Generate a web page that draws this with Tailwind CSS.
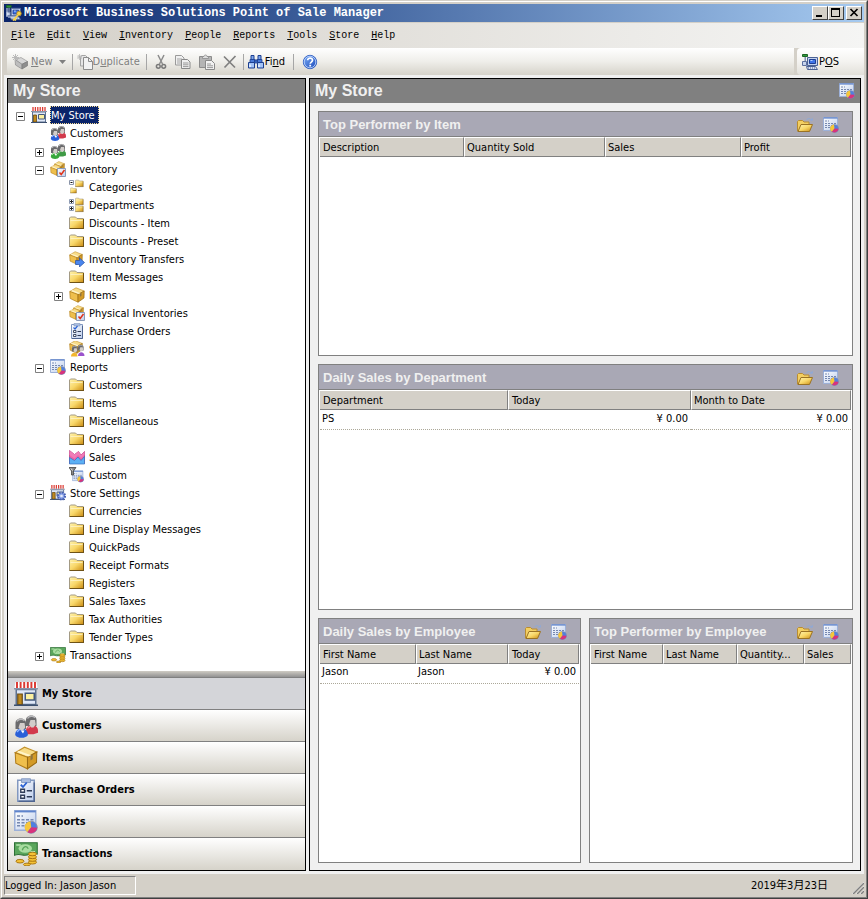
<!DOCTYPE html>
<html lang="en">
<head>
<meta charset="UTF-8" />
<meta name="viewport" content="width=device-width, initial-scale=1" />
<title>Microsoft Business Solutions Point of Sale Manager</title>
<script src="https://cdn.jsdelivr.net/npm/@tailwindcss/browser@4"></script>
</head>
<body class="bg-[#d4d0c8] font-['DejaVu_Sans_Condensed','DejaVu_Sans',sans-serif] text-[11px] leading-4 text-black">

  <!-- ICONS -->
  <svg class="size-0" aria-hidden="true">
    <defs>
      <linearGradient id="gFolder" x1="0" y1="0" x2="1" y2="1"><stop offset="0" stop-color="#fff3b0"/><stop offset=".5" stop-color="#f8d768"/><stop offset="1" stop-color="#c98a12"/></linearGradient>
      <linearGradient id="gBlue" x1="0" y1="0" x2="1" y2="1"><stop offset="0" stop-color="#7fb0f8"/><stop offset="1" stop-color="#1746b8"/></linearGradient>
      <linearGradient id="gPaper" x1="0" y1="0" x2="1" y2="1"><stop offset="0" stop-color="#ffffff"/><stop offset="1" stop-color="#bccdec"/></linearGradient>
      <symbol id="folder" viewBox="0 0 16 16">
        <path d="M.5 13.500V3l1-1h5l1.500 1.500h6.500v10z" fill="url(#gFolder)"/>
        <path d="M.5 13.500V3l1-1h5l1.500 1.500h6.500" fill="none" stroke="#a39a84"/>
        <path d="M1.500 5.500h12" stroke="#fffae0" opacity=".6"/>
        <path d="M.5 13.500h14.500M14.500 4v9.500" stroke="#6e5216"/>
      </symbol>
      <symbol id="folder-open" viewBox="0 0 16 16">
        <path d="M.5 14V4.500l1-1h4l1.500 1.500h5v9z" fill="#f3cf62" stroke="#b98c30"/>
        <path d="M1 14.500l3-7h11.500l-3 7z" fill="url(#gFolder)" stroke="#9a7224"/>
        <path d="M9.500 3c1.500-2 4-2 5 .5" fill="none" stroke="#8ea8d8"/><path d="M12.800 3.500h3V.8z" fill="#8ea8d8"/>
      </symbol>
      <symbol id="store" viewBox="0 0 16 16">
        <path d="M1.500 5h13v10h-13z" fill="#dfe8f8" stroke="#5f7290"/>
        <path d="M1 0h14l.8 4.500H.2z" fill="#fff"/>
        <path d="M2 0v4M4.400 0v4M6.800 0v4M9.200 0v4M11.600 0v4M14 0v4" stroke="#dc3a32" stroke-width="1.300"/>
        <path d="M0 4.500h16" stroke="#8a94a8"/>
        <path d="M2.500 8h3v7h-3z" fill="#c08a1c" stroke="#6a4a10" stroke-width=".8"/>
        <path d="M7.500 7.500h6v4.500h-6z" fill="#fbf0a0" stroke="#44587c"/>
        <path d="M0 15.500h16" stroke="#3c506f"/>
      </symbol>
      <symbol id="person-head" viewBox="0 0 16 16">
        <path d="M6 4c0-4 7-4 7 0v4H6z" fill="#6a6a6c"/><path d="M7 3c1-2 4-2 5-.5" stroke="#b9b9bb" fill="none"/>
        <path d="M9 4h3l.5 3-1.500 2H9.500L8 7z" fill="#d2cdca"/>
      </symbol>
      <symbol id="customers" viewBox="0 0 16 16">
        <path d="M8 11c0-5 8-5 8 0v1.500l-3 1H8z" fill="#d23a4c"/><path d="M9 9.500l2-1.500" stroke="#f48a94"/>
        <use href="#person-head" x="2" y="0" width="16" height="16"/>
        <path d="M.8 14c0-6 8.500-6 8.500 0-1 2.500-7.500 2.500-8.500 0z" fill="#2a60d8"/><path d="M2 12l2-2" stroke="#8cb4ff"/>
        <use href="#person-head" x="-5" y="2" width="16" height="16"/>
        <path d="M4.500 11l1.500 2 1-2z" fill="#fff"/>
      </symbol>
      <symbol id="employees" viewBox="0 0 16 16">
        <path d="M8 11c0-5 8-5 8 0v1.500l-3 1H8z" fill="#3f9a46"/><path d="M9 9.500l2-1.500" stroke="#96d898"/>
        <use href="#person-head" x="2" y="0" width="16" height="16"/>
        <path d="M.8 14c0-6 8.500-6 8.500 0-1 2.500-7.500 2.500-8.500 0z" fill="#37a83c"/><path d="M2 12l2-2" stroke="#a4e6a0"/>
        <use href="#person-head" x="-5" y="2" width="16" height="16"/>
        <path d="M4.500 11l1.500 2 1-2z" fill="#fff"/>
      </symbol>
      <symbol id="box" viewBox="0 0 16 16">
        <path d="M.8 4.500L7 .8l8.200 3.200L9 7.500z" fill="#f8dc88" stroke="#c3922c" stroke-width=".7"/>
        <path d="M.8 4.500L9 7.500v7.700L1.200 11.500z" fill="#efbf4c" stroke="#b07c1a" stroke-width=".7"/>
        <path d="M15.200 4L9 7.500v7.700l6-4.200z" fill="#d39a26" stroke="#9a6c14" stroke-width=".7"/>
        <path d="M3.200 3.100l8.200 3.100v1L11 6.400 9.800 7 2 4z" fill="#fff6d0" opacity=".9"/><path d="M11 6.500l1.500-.8v3l-1.500 1z" fill="#8f7440"/>
      </symbol>
      <symbol id="inventory" viewBox="0 0 16 16">
        <use href="#box" x="4" y="0" width="11" height="11"/>
        <use href="#box" x="0" y="3" width="12" height="12"/>
        <path d="M7.500 7.500h8v8h-8z" fill="url(#gPaper)" stroke="#8a9ab8"/>
        <path d="M9.500 11.500l1.700 2L14.500 9" fill="none" stroke="#e0341c" stroke-width="1.500"/>
      </symbol>
      <symbol id="categories" viewBox="0 0 16 16">
        <path d="M.5 1.500h4v4h-4z" fill="#fff" stroke="#8a94a8"/><path d="M1.500 3.500h2" stroke="#111"/>
        <use href="#folder" x="6" y="0" width="9" height="9"/><use href="#folder" x="1" y="8" width="7" height="7"/>
      </symbol>
      <symbol id="departments" viewBox="0 0 16 16">
        <path d="M.5 2.500h4v4h-4zM.5 9.500h4v4h-4z" fill="#fff" stroke="#8f9cb4"/><path d="M1 4.500h3M2.500 3v3M1 11.500h3M2.500 10v3" stroke="#222"/>
        <use href="#folder" x="6" y="0" width="9" height="9"/><use href="#folder" x="6" y="7" width="9" height="9"/>
      </symbol>
      <symbol id="transfer" viewBox="0 0 16 16">
        <use href="#box" x="0" y="0" width="14" height="14"/>
        <path d="M6.500 9.500h4V7l5 4.500-5 4.500v-2.500h-4z" fill="#4a86ee" stroke="#2450a8" stroke-width=".7"/>
      </symbol>
      <symbol id="orders" viewBox="0 0 16 16">
        <path d="M2.500 1.500h11v14h-11z" fill="url(#gPaper)" stroke="#8298c0"/><path d="M13.500 3v12.500H3" fill="none" stroke="#4f6590"/>
        <path d="M5 .5h6v2.500H5z" fill="#a9bce0" stroke="#8298c0" stroke-width=".6"/>
        <path d="M4.500 4.500l1.500 1.500 2.500-3" fill="none" stroke="#2b62d4" stroke-width="1.200"/>
        <path d="M4.500 7.500h2.500v2H4.500zM4.500 11.500h2.500v2H4.500z" fill="#fff" stroke="#2f3c58" stroke-width=".9"/><path d="M8.500 8.500H12M8.500 12.500H12" stroke="#2f3c58"/>
      </symbol>
      <symbol id="suppliers" viewBox="0 0 16 16">
        <use href="#box" x="0" y="-1" width="14" height="14"/>
        <use href="#person-head" x="-2" y="4" width="13" height="13"/><use href="#person-head" x="4" y="3" width="13" height="13"/>
        <path d="M2 15.500c0-5 6.500-5 6.500 0z" fill="#f3b62c"/><path d="M9 15c0-5 6.500-5 6.500 0z" fill="#9a52cc"/>
      </symbol>
      <symbol id="report" viewBox="0 0 16 16">
        <path d="M.5.500h14v13H.5z" fill="url(#gPaper)" stroke="#9cb0d8"/><path d="M.5 1h14" stroke="#5f84cc" stroke-width="1.200"/>
        <path d="M2 4h4M2 6.500h11M2 8.500h11M2 10.500h6" stroke="#7688b0" stroke-dasharray="2 1"/>
        <circle cx="11.500" cy="11.500" r="4" fill="#4f7fe0" stroke="#8c90a8" stroke-width=".6"/>
        <path d="M11.500 11.500L11 7.500c-5 .8-4.500 6-2 7.200z" fill="#f6c63a"/><path d="M11.500 11.500L9 14.800c2.500 1.500 6 .2 6.500-3z" fill="#d8337c"/>
      </symbol>
      <symbol id="sales" viewBox="0 0 16 16">
        <path d="M.5 1.500l5 4 4-3 2.500 3.500 3.500-3.500v12H.5z" fill="#ee62a6" stroke="#b02e72" stroke-width=".7"/>
        <path d="M.5 8.500l5 3 3.500-3.500 3 3.500 3.500-4v7.500H.5z" fill="#5cb0f4" stroke="#3470c0" stroke-width=".7"/>
        <path d="M.5 1.500l5 4 4-3 2.500 3.500 3.500-3.500v3.500L12 9 9 6 5.500 9.500.5 6z" fill="#f07cb8"/>
      </symbol>
      <symbol id="custom" viewBox="0 0 16 16">
        <use href="#report" x="3" y="3" width="12" height="13"/>
        <path d="M0 .5h7L4.500 4v4h-2V4z" fill="#888" stroke="#333" stroke-width=".7"/><path d="M2 1.500l1.500 2" stroke="#eee"/>
      </symbol>
      <symbol id="settings" viewBox="0 0 16 16">
        <use href="#store" width="15" height="15"/>
        <circle cx="11.500" cy="11" r="3.600" fill="#8ca4e8" stroke="#4860b4" stroke-width="2" stroke-dasharray="1.600 1.200"/>
        <circle cx="11.500" cy="11" r="1.300" fill="#e6ecfa"/>
      </symbol>
      <symbol id="transactions" viewBox="0 0 16 16">
        <path d="M.3.500h15.200v7.500c-3-1.500-6 1.500-9 .8-2.500-.6-4-1-6.200 0z" fill="#5aa65c" stroke="#2c6e34" stroke-width=".7"/>
        <ellipse cx="7.500" cy="4.300" rx="4.500" ry="2.800" fill="#a8dca0"/><path d="M5.500 5.500c1-3 3-3 4-1" fill="none" stroke="#5aa65c" stroke-width=".8"/><path d="M1.500 2h3M11 6.500h3" stroke="#b8e6b0"/>
        <g fill="#f4c136" stroke="#a4700c" stroke-width=".6"><ellipse cx="12.300" cy="13.500" rx="2.700" ry="1.200"/><ellipse cx="12.300" cy="11.700" rx="2.700" ry="1.200"/><ellipse cx="12.300" cy="9.900" rx="2.700" ry="1.200"/><ellipse cx="12.300" cy="8" rx="2.700" ry="1.200"/><ellipse cx="4" cy="12.800" rx="2.700" ry="1.200"/><ellipse cx="8.600" cy="15" rx="2.300" ry=".9"/></g>
      </symbol>
      <symbol id="pos" viewBox="0 0 16 16">
        <path d="M.5.500h5v2h-5z" fill="#2f9a3c" stroke="#1c6424"/><path d="M2.500 3h1.500v8H2.500z" fill="#7f90b0"/>
        <path d="M.5 7.500h4v4h-4z" fill="#c8d4ec" stroke="#5c70a0"/>
        <path d="M5.500 3.500h10v8h-10z" fill="#c4d2ee" stroke="#4c6294"/><path d="M7.500 5.500h6v4h-6z" fill="#3f74e8" stroke="#1e3f94"/><path d="M8.500 6.500h2" stroke="#b8d4ff"/>
        <path d="M4.500 12.500h9l2 3h-10z" fill="#dce4f4" stroke="#4c6294"/><path d="M6 14h8" stroke="#4c6294" stroke-dasharray="1 1"/>
      </symbol>
      <symbol id="app" viewBox="0 0 16 16">
        <use href="#pos" width="15" height="15"/>
        <path d="M1 3v9M2 12h8" stroke="#dfe8f8"/>
        <circle cx="13" cy="8.500" r="2.300" fill="#f6d24a" stroke="#a8801c" stroke-width=".8"/><path d="M12 10l-5 5.500M8.500 14l1.500 1.500" stroke="#f6d24a" stroke-width="1.800"/>
      </symbol>
      <symbol id="new" viewBox="0 0 16 16">
        <path d="M3 5.500L9 3.500l6.500 4-5.500 2.800z" fill="#d6d6d6" stroke="#9a9a9a" stroke-width=".7"/>
        <path d="M3 5.500l7 4.800V15L3.500 11z" fill="#bdbdbd" stroke="#8c8c8c" stroke-width=".7"/>
        <path d="M15.500 7.500L10 10.300V15l5.500-3.300z" fill="#8e8e8e" stroke="#7a7a7a" stroke-width=".7"/>
        <path d="M3.500 0v7M0 3.500h7M1 1l5 5M6 1L1 6" stroke="#b4b4b4" stroke-width=".9"/>
      </symbol>
      <symbol id="duplicate" viewBox="0 0 16 16">
        <path d="M4.500 1.500h4l2 2V12H3.500V4z" fill="#e6e6e6" stroke="#a4a4a4"/>
        <path d="M6.500 3.500h5l4 4v8h-9z" fill="#f2f2f2" stroke="#8c8c8c"/><path d="M11.500 3.500v4h4" fill="none" stroke="#8c8c8c"/>
        <path d="M2.500 0v6M0 3h5M.7 1l4 4M4.500 1l-4 4" stroke="#b8b8b8" stroke-width=".8"/>
      </symbol>
      <symbol id="cut" viewBox="0 0 16 16">
        <path d="M5 1l4.500 9M11 1L6.500 10" stroke="#8c8c8c" stroke-width="1.500"/>
        <circle cx="5.300" cy="12.300" r="1.900" fill="none" stroke="#7a7a7a" stroke-width="1.500"/><circle cx="10.700" cy="12.300" r="1.900" fill="none" stroke="#7a7a7a" stroke-width="1.500"/>
      </symbol>
      <symbol id="copy" viewBox="0 0 16 16">
        <path d="M.5 1.500h6l2.500 2.500v7H.5z" fill="#f0f0f0" stroke="#9a9a9a"/><path d="M2 5h5M2 7h5M2 9h4" stroke="#a4a4a4"/>
        <path d="M6.500 5.500h6l2.500 2.500v6.500H6.500z" fill="#f0f0f0" stroke="#8a8a8a"/><path d="M8 9h5.500M8 10.800h5.500M8 12.600h5.500" stroke="#9a9a9a"/>
      </symbol>
      <symbol id="paste" viewBox="0 0 16 16">
        <path d="M.5 2.500h12v11H.5z" fill="#b4b4b4" stroke="#8c8c8c"/><path d="M3.500 4.500v-2h1.500c0-2 3-2 3 0h1.500v2z" fill="#dedede" stroke="#8c8c8c" stroke-width=".8"/>
        <path d="M6.500 6.500h6l3 3v6h-9z" fill="#f2f2f2" stroke="#8a8a8a"/><path d="M8 10h4M8 11.800h6M8 13.600h6" stroke="#9a9a9a"/>
      </symbol>
      <symbol id="delete" viewBox="0 0 16 16"><path d="M1 2.500l11 11M12.500 2L1.500 13.500" stroke="#808080" stroke-width="1.700"/></symbol>
      <symbol id="find" viewBox="0 0 16 16">
        <path d="M3 1.500h3v4h-3zM10 1.500h3v4h-3z" fill="#7ea6ec" stroke="#1c3f90"/>
        <path d="M2 5.500h5v3H2zM9 5.500h5v3H9zM6.500 6h3v3h-3z" fill="#4a7ad8" stroke="#1c3f90" stroke-width=".8"/>
        <path d="M.5 8.500h6v5.500h-6zM9.500 8.500h6v5.500h-6z" fill="#a4c4f8" stroke="#1c3f90"/><path d="M2 10.500v2.500M11 10.500v2.500" stroke="#fff" stroke-width="1.200"/>
      </symbol>
      <symbol id="help" viewBox="0 0 16 16">
        <circle cx="8" cy="8" r="6.700" fill="url(#gBlue)" stroke="#3a66c4"/><circle cx="8" cy="8" r="5.800" fill="none" stroke="#c4daff" stroke-width=".8"/>
        <path d="M5.700 6.300c0-3 4.900-2.800 4.800 0 0 1.700-2.300 1.800-2.300 3.500" fill="none" stroke="#fff" stroke-width="1.700"/><path d="M7.300 10.800h1.800v1.700H7.300z" fill="#fff"/>
      </symbol>
      <symbol id="minus" viewBox="0 0 9 9"><path d="M.5.500h8v8h-8z" fill="#fff" stroke="#808080"/><path d="M2 4.500h5" stroke="#000"/></symbol>
      <symbol id="plus" viewBox="0 0 9 9"><path d="M.5.500h8v8h-8z" fill="#fff" stroke="#808080"/><path d="M2 4.500h5M4.500 2v5" stroke="#000"/></symbol>
    </defs>
  </svg>

  <!-- WINDOW FRAME -->
  <div class="flex min-h-screen flex-col border border-t-[#d4d0c8] border-r-[#404040] border-b-[#404040] border-l-[#d4d0c8]">
  <div class="flex flex-1 flex-col border border-t-white border-r-[#808080] border-b-[#808080] border-l-white p-0.5">

    <!-- TITLE BAR -->
    <header class="mb-px flex h-[18px] items-center bg-linear-to-r from-[#0a246a] to-[#a6caf0] px-0.5">
      <svg class="mr-0.5 size-4"><use href="#app"/></svg>
      <h1 class="flex-1 truncate font-['Liberation_Mono',monospace] text-[12px] font-bold text-white">Microsoft Business Solutions Point of Sale Manager</h1>
      <button aria-label="Minimize" class="h-3.5 w-4 border border-t-white border-r-[#404040] border-b-[#404040] border-l-white bg-[#d4d0c8]"><svg viewBox="0 0 14 12" class="h-3 w-3.5"><path d="M3 8h6v2H3z"/></svg></button>
      <button aria-label="Maximize" class="mr-0.5 h-3.5 w-4 border border-t-white border-r-[#404040] border-b-[#404040] border-l-white bg-[#d4d0c8]"><svg viewBox="0 0 14 12" class="h-3 w-3.5"><path d="M2 1h9v9H2zM3 3v6h7V3z" fill-rule="evenodd"/></svg></button>
      <button aria-label="Close" class="h-3.5 w-4 border border-t-white border-r-[#404040] border-b-[#404040] border-l-white bg-[#d4d0c8]"><svg viewBox="0 0 14 12" class="h-3 w-3.5"><path d="M3.500 2l7 7M10.500 2l-7 7" stroke="#000" stroke-width="1.700"/></svg></button>
    </header>

    <div class="bg-linear-to-r from-[#d4d0c8] to-[#f5f5f4]">
      <!-- MENU -->
      <nav class="flex h-[25px] items-center px-px font-['Liberation_Mono',monospace] text-[10px]">
        <button class="px-1.5"><u>F</u>ile</button>
        <button class="px-1.5"><u>E</u>dit</button>
        <button class="px-1.5"><u>V</u>iew</button>
        <button class="px-1.5"><u>I</u>nventory</button>
        <button class="px-1.5"><u>P</u>eople</button>
        <button class="px-1.5"><u>R</u>eports</button>
        <button class="px-1.5"><u>T</u>ools</button>
        <button class="px-1.5"><u>S</u>tore</button>
        <button class="px-1.5"><u>H</u>elp</button>
      </nav>

      <!-- TOOLBAR -->
      <div class="flex h-[27px] pl-[3px]">
        <div class="flex flex-1 items-center rounded-l-sm bg-linear-to-b from-white via-[#efeeea] to-[#d6d3ca] pl-[5px]">
          <button disabled class="flex items-center gap-[3px] text-[#808080]"><svg class="size-4"><use href="#new"/></svg><span><u>N</u>ew</span></button>
          <button disabled aria-label="New options" class="px-1.5"><svg viewBox="0 0 7 4" class="h-1 w-[7px]"><path d="M0 0h7L3.500 4z" fill="#808080"/></svg></button>
          <span class="mr-1 h-4 w-px bg-[#a6a6a6]"></span>
          <button disabled class="flex items-center text-[#808080]"><svg class="size-4"><use href="#duplicate"/></svg><span>D<u>u</u>plicate</span></button>
          <span class="mx-1.5 h-4 w-px bg-[#a6a6a6]"></span>
          <button disabled aria-label="Cut" class="pr-0.5"><svg class="size-4"><use href="#cut"/></svg></button>
          <button disabled aria-label="Copy" class="px-1"><svg class="size-4"><use href="#copy"/></svg></button>
          <button disabled aria-label="Paste" class="px-1"><svg class="size-4"><use href="#paste"/></svg></button>
          <button disabled aria-label="Delete" class="px-1"><svg class="size-4"><use href="#delete"/></svg></button>
          <span class="mr-1 h-4 w-px bg-[#a6a6a6]"></span>
          <button class="flex items-center gap-px"><svg class="size-4"><use href="#find"/></svg><span>Fi<u>n</u>d</span></button>
          <span class="mx-2 h-4 w-px bg-[#a6a6a6]"></span>
          <button aria-label="Help"><svg class="size-4"><use href="#help"/></svg></button>
        </div>
        <div class="w-[70px] bg-[#d4d0c8] pl-[3px]">
          <button class="flex h-full w-full items-center gap-px rounded-l-sm bg-linear-to-b from-white via-[#f4f3f0] to-[#e2e0da] pl-[5px]"><svg class="size-4"><use href="#pos"/></svg><span>P<u>O</u>S</span></button>
        </div>
      </div>
    </div>

    <!-- MAIN AREA -->
    <div class="flex flex-1 gap-[3px] bg-[#f0f0f0] p-[3px]">

      <!-- SIDE PANEL -->
      <aside class="flex w-[299px] shrink-0 flex-col border border-black bg-white">
        <h2 class="flex h-6 items-center bg-[#808080] px-[5px] font-['Liberation_Sans',sans-serif] text-[16px] font-bold text-[#f0f0f0]">My Store</h2>

        <!-- tree -->
        <ul class="flex-1 pt-[3px] pl-2">
          <li>
            <div class="flex h-[18px] items-center"><button aria-label="Collapse My Store" class="mt-[3px] mr-1.5"><svg class="size-[9px]"><use href="#minus"/></svg></button><svg class="mr-[3px] size-4"><use href="#store"/></svg><a href="#" class="bg-[#0a246a] pt-0.5 pr-1 pl-px text-white outline-1 -outline-offset-1 outline-dotted outline-[#f5db95]">My Store</a></div>
            <ul class="pl-[19px]">
              <li class="flex h-[18px] items-center"><svg class="mr-[3px] ml-[15px] size-4"><use href="#customers"/></svg><a href="#" class="px-px pt-0.5">Customers</a></li>
              <li class="flex h-[18px] items-center"><button aria-label="Expand Employees" class="mt-[3px] mr-1.5"><svg class="size-[9px]"><use href="#plus"/></svg></button><svg class="mr-[3px] size-4"><use href="#employees"/></svg><a href="#" class="px-px pt-0.5">Employees</a></li>
              <li>
                <div class="flex h-[18px] items-center"><button aria-label="Collapse Inventory" class="mt-[3px] mr-1.5"><svg class="size-[9px]"><use href="#minus"/></svg></button><svg class="mr-[3px] size-4"><use href="#inventory"/></svg><a href="#" class="px-px pt-0.5">Inventory</a></div>
                <ul class="pl-[19px]">
                  <li class="flex h-[18px] items-center"><svg class="mr-[3px] ml-[15px] size-4"><use href="#categories"/></svg><a href="#" class="px-px pt-0.5">Categories</a></li>
                  <li class="flex h-[18px] items-center"><svg class="mr-[3px] ml-[15px] size-4"><use href="#departments"/></svg><a href="#" class="px-px pt-0.5">Departments</a></li>
                  <li class="flex h-[18px] items-center"><svg class="mr-[3px] ml-[15px] size-4"><use href="#folder"/></svg><a href="#" class="px-px pt-0.5">Discounts - Item</a></li>
                  <li class="flex h-[18px] items-center"><svg class="mr-[3px] ml-[15px] size-4"><use href="#folder"/></svg><a href="#" class="px-px pt-0.5">Discounts - Preset</a></li>
                  <li class="flex h-[18px] items-center"><svg class="mr-[3px] ml-[15px] size-4"><use href="#transfer"/></svg><a href="#" class="px-px pt-0.5">Inventory Transfers</a></li>
                  <li class="flex h-[18px] items-center"><svg class="mr-[3px] ml-[15px] size-4"><use href="#folder"/></svg><a href="#" class="px-px pt-0.5">Item Messages</a></li>
                  <li class="flex h-[18px] items-center"><button aria-label="Expand Items" class="mt-[3px] mr-1.5"><svg class="size-[9px]"><use href="#plus"/></svg></button><svg class="mr-[3px] size-4"><use href="#box"/></svg><a href="#" class="px-px pt-0.5">Items</a></li>
                  <li class="flex h-[18px] items-center"><svg class="mr-[3px] ml-[15px] size-4"><use href="#inventory"/></svg><a href="#" class="px-px pt-0.5">Physical Inventories</a></li>
                  <li class="flex h-[18px] items-center"><svg class="mr-[3px] ml-[15px] size-4"><use href="#orders"/></svg><a href="#" class="px-px pt-0.5">Purchase Orders</a></li>
                  <li class="flex h-[18px] items-center"><svg class="mr-[3px] ml-[15px] size-4"><use href="#suppliers"/></svg><a href="#" class="px-px pt-0.5">Suppliers</a></li>
                </ul>
              </li>
              <li>
                <div class="flex h-[18px] items-center"><button aria-label="Collapse Reports" class="mt-[3px] mr-1.5"><svg class="size-[9px]"><use href="#minus"/></svg></button><svg class="mr-[3px] size-4"><use href="#report"/></svg><a href="#" class="px-px pt-0.5">Reports</a></div>
                <ul class="pl-[19px]">
                  <li class="flex h-[18px] items-center"><svg class="mr-[3px] ml-[15px] size-4"><use href="#folder"/></svg><a href="#" class="px-px pt-0.5">Customers</a></li>
                  <li class="flex h-[18px] items-center"><svg class="mr-[3px] ml-[15px] size-4"><use href="#folder"/></svg><a href="#" class="px-px pt-0.5">Items</a></li>
                  <li class="flex h-[18px] items-center"><svg class="mr-[3px] ml-[15px] size-4"><use href="#folder"/></svg><a href="#" class="px-px pt-0.5">Miscellaneous</a></li>
                  <li class="flex h-[18px] items-center"><svg class="mr-[3px] ml-[15px] size-4"><use href="#folder"/></svg><a href="#" class="px-px pt-0.5">Orders</a></li>
                  <li class="flex h-[18px] items-center"><svg class="mr-[3px] ml-[15px] size-4"><use href="#sales"/></svg><a href="#" class="px-px pt-0.5">Sales</a></li>
                  <li class="flex h-[18px] items-center"><svg class="mr-[3px] ml-[15px] size-4"><use href="#custom"/></svg><a href="#" class="px-px pt-0.5">Custom</a></li>
                </ul>
              </li>
              <li>
                <div class="flex h-[18px] items-center"><button aria-label="Collapse Store Settings" class="mt-[3px] mr-1.5"><svg class="size-[9px]"><use href="#minus"/></svg></button><svg class="mr-[3px] size-4"><use href="#settings"/></svg><a href="#" class="px-px pt-0.5">Store Settings</a></div>
                <ul class="pl-[19px]">
                  <li class="flex h-[18px] items-center"><svg class="mr-[3px] ml-[15px] size-4"><use href="#folder"/></svg><a href="#" class="px-px pt-0.5">Currencies</a></li>
                  <li class="flex h-[18px] items-center"><svg class="mr-[3px] ml-[15px] size-4"><use href="#folder"/></svg><a href="#" class="px-px pt-0.5">Line Display Messages</a></li>
                  <li class="flex h-[18px] items-center"><svg class="mr-[3px] ml-[15px] size-4"><use href="#folder"/></svg><a href="#" class="px-px pt-0.5">QuickPads</a></li>
                  <li class="flex h-[18px] items-center"><svg class="mr-[3px] ml-[15px] size-4"><use href="#folder"/></svg><a href="#" class="px-px pt-0.5">Receipt Formats</a></li>
                  <li class="flex h-[18px] items-center"><svg class="mr-[3px] ml-[15px] size-4"><use href="#folder"/></svg><a href="#" class="px-px pt-0.5">Registers</a></li>
                  <li class="flex h-[18px] items-center"><svg class="mr-[3px] ml-[15px] size-4"><use href="#folder"/></svg><a href="#" class="px-px pt-0.5">Sales Taxes</a></li>
                  <li class="flex h-[18px] items-center"><svg class="mr-[3px] ml-[15px] size-4"><use href="#folder"/></svg><a href="#" class="px-px pt-0.5">Tax Authorities</a></li>
                  <li class="flex h-[18px] items-center"><svg class="mr-[3px] ml-[15px] size-4"><use href="#folder"/></svg><a href="#" class="px-px pt-0.5">Tender Types</a></li>
                </ul>
              </li>
              <li class="flex h-[18px] items-center"><button aria-label="Expand Transactions" class="mt-[3px] mr-1.5"><svg class="size-[9px]"><use href="#plus"/></svg></button><svg class="mr-[3px] size-4"><use href="#transactions"/></svg><a href="#" class="px-px pt-0.5">Transactions</a></li>
            </ul>
          </li>
        </ul>

        <div class="h-[7px] border-b border-[#808080] bg-linear-to-b from-[#cfccc4] to-[#929292]"></div>

        <!-- shortcuts -->
        <nav class="flex flex-col font-bold">
          <button class="flex h-8 items-center gap-1 border-b border-[#808080] bg-[#d4d5d9] px-1.5"><svg class="size-6"><use href="#store"/></svg>My Store</button>
          <button class="flex h-8 items-center gap-1 border-b border-[#808080] bg-linear-to-b from-white to-[#d6d3ca] px-1.5"><svg class="size-6"><use href="#customers"/></svg>Customers</button>
          <button class="flex h-8 items-center gap-1 border-b border-[#808080] bg-linear-to-b from-white to-[#d6d3ca] px-1.5"><svg class="size-6"><use href="#box"/></svg>Items</button>
          <button class="flex h-8 items-center gap-1 border-b border-[#808080] bg-linear-to-b from-white to-[#d6d3ca] px-1.5"><svg class="size-6"><use href="#orders"/></svg>Purchase Orders</button>
          <button class="flex h-8 items-center gap-1 border-b border-[#808080] bg-linear-to-b from-white to-[#d6d3ca] px-1.5"><svg class="size-6"><use href="#report"/></svg>Reports</button>
          <button class="flex h-8 items-center gap-1 bg-linear-to-b from-white to-[#d6d3ca] px-1.5"><svg class="size-6"><use href="#transactions"/></svg>Transactions</button>
        </nav>
      </aside>

      <!-- DASHBOARD -->
      <main class="flex min-w-0 flex-1 flex-col border border-black">
        <div class="flex h-6 items-center justify-between bg-[#808080] px-[5px] font-['Liberation_Sans',sans-serif] text-[16px] font-bold text-[#f0f0f0]">
          <h2>My Store</h2>
          <button aria-label="Reports"><svg class="size-4"><use href="#report"/></svg></button>
        </div>

        <div class="grid flex-1 grid-cols-[263fr_264fr] grid-rows-3 gap-2 pt-2 pr-[7px] pb-[7px] pl-2">
          <section class="col-span-2 border border-[#808080] bg-white">
            <div class="flex h-6 items-center gap-2.5 bg-[#a9a8b5] pt-0.5 pr-[13px] pl-1">
              <h3 class="flex-1 font-['Liberation_Sans',sans-serif] text-[13px] font-bold text-[#f0f0f0]">Top Performer by Item</h3>
              <button aria-label="Open"><svg class="size-4"><use href="#folder-open"/></svg></button>
              <button aria-label="Report"><svg class="size-4"><use href="#report"/></svg></button>
            </div>
            <div class="border-t border-[#808080] pl-px pr-px">
              <table class="w-full table-fixed border-separate border-spacing-0">
                <colgroup><col class="w-[144px]" /><col class="w-[141px]" /><col class="w-[136px]" /><col /></colgroup>
                <thead>
                  <tr>
                    <th class="h-5 truncate border-t border-r border-b border-t-white border-r-[#808080] border-b-[#808080] bg-[#d4d0c8] px-[3px] pt-0.5 text-left font-normal">Description</th>
                    <th class="h-5 truncate border border-t-white border-r-[#808080] border-b-[#808080] border-l-white bg-[#d4d0c8] px-0.5 pt-0.5 text-left font-normal">Quantity Sold</th>
                    <th class="h-5 truncate border border-t-white border-r-[#808080] border-b-[#808080] border-l-white bg-[#d4d0c8] px-0.5 pt-0.5 text-left font-normal">Sales</th>
                    <th class="h-5 truncate border border-t-white border-r-[#808080] border-b-[#808080] border-l-white bg-[#d4d0c8] px-0.5 pt-0.5 text-left font-normal">Profit</th>
                  </tr>
                </thead>
              </table>
            </div>
          </section>

          <section class="col-span-2 border border-[#808080] bg-white">
            <div class="flex h-6 items-center gap-2.5 bg-[#a9a8b5] pt-0.5 pr-[13px] pl-1">
              <h3 class="flex-1 font-['Liberation_Sans',sans-serif] text-[13px] font-bold text-[#f0f0f0]">Daily Sales by Department</h3>
              <button aria-label="Open"><svg class="size-4"><use href="#folder-open"/></svg></button>
              <button aria-label="Report"><svg class="size-4"><use href="#report"/></svg></button>
            </div>
            <div class="border-t border-[#808080] pl-px pr-px">
              <table class="w-full table-fixed border-separate border-spacing-0">
                <colgroup><col class="w-[188px]" /><col class="w-[183px]" /><col /></colgroup>
                <thead>
                  <tr>
                    <th class="h-5 truncate border-t border-r border-b border-t-white border-r-[#808080] border-b-[#808080] bg-[#d4d0c8] px-[3px] pt-0.5 text-left font-normal">Department</th>
                    <th class="h-5 truncate border border-t-white border-r-[#808080] border-b-[#808080] border-l-white bg-[#d4d0c8] px-[3px] pt-0.5 text-left font-normal">Today</th>
                    <th class="h-5 truncate border border-t-white border-r-[#808080] border-b-[#808080] border-l-white bg-[#d4d0c8] px-0.5 pt-0.5 text-left font-normal">Month to Date</th>
                  </tr>
                </thead>
                <tbody>
                  <tr>
                    <td class="h-5 truncate border-b border-dotted border-[#aca899] px-0.5 pb-0.5">PS</td>
                    <td class="h-5 truncate border-b border-dotted border-[#aca899] px-[3px] pb-0.5 text-right">¥ 0.00</td>
                    <td class="h-5 truncate border-b border-dotted border-[#aca899] px-[3px] pb-0.5 text-right">¥ 0.00</td>
                  </tr>
                </tbody>
              </table>
            </div>
          </section>

          <section class="border border-[#808080] bg-white">
            <div class="flex h-6 items-center gap-2.5 bg-[#a9a8b5] pt-0.5 pr-[13px] pl-1">
              <h3 class="flex-1 font-['Liberation_Sans',sans-serif] text-[13px] font-bold text-[#f0f0f0]">Daily Sales by Employee</h3>
              <button aria-label="Open"><svg class="size-4"><use href="#folder-open"/></svg></button>
              <button aria-label="Report"><svg class="size-4"><use href="#report"/></svg></button>
            </div>
            <div class="border-t border-[#808080] pl-px pr-px">
              <table class="w-full table-fixed border-separate border-spacing-0">
                <colgroup><col class="w-[96px]" /><col class="w-[92px]" /><col /></colgroup>
                <thead>
                  <tr>
                    <th class="h-5 truncate border-t border-r border-b border-t-white border-r-[#808080] border-b-[#808080] bg-[#d4d0c8] px-[3px] pt-0.5 text-left font-normal">First Name</th>
                    <th class="h-5 truncate border border-t-white border-r-[#808080] border-b-[#808080] border-l-white bg-[#d4d0c8] px-0.5 pt-0.5 text-left font-normal">Last Name</th>
                    <th class="h-5 truncate border border-t-white border-r-[#808080] border-b-[#808080] border-l-white bg-[#d4d0c8] px-[3px] pt-0.5 text-left font-normal">Today</th>
                  </tr>
                </thead>
                <tbody>
                  <tr>
                    <td class="h-5 truncate border-b border-dotted border-[#aca899] px-0.5 pb-0.5">Jason</td>
                    <td class="h-5 truncate border-b border-dotted border-[#aca899] px-0.5 pb-0.5">Jason</td>
                    <td class="h-5 truncate border-b border-dotted border-[#aca899] px-[3px] pb-0.5 text-right">¥ 0.00</td>
                  </tr>
                </tbody>
              </table>
            </div>
          </section>

          <section class="border border-[#808080] bg-white">
            <div class="flex h-6 items-center gap-2.5 bg-[#a9a8b5] pt-0.5 pr-[13px] pl-1">
              <h3 class="flex-1 whitespace-nowrap font-['Liberation_Sans',sans-serif] text-[13px] font-bold text-[#f0f0f0]">Top Performer by Employee</h3>
              <button aria-label="Open"><svg class="size-4"><use href="#folder-open"/></svg></button>
              <button aria-label="Report"><svg class="size-4"><use href="#report"/></svg></button>
            </div>
            <div class="border-t border-[#808080] pl-px pr-px">
              <table class="w-full table-fixed border-separate border-spacing-0">
                <colgroup><col class="w-[72px]" /><col class="w-[74px]" /><col class="w-[67px]" /><col /></colgroup>
                <thead>
                  <tr>
                    <th class="h-5 truncate border-t border-r border-b border-t-white border-r-[#808080] border-b-[#808080] bg-[#d4d0c8] px-[3px] pt-0.5 text-left font-normal">First Name</th>
                    <th class="h-5 truncate border border-t-white border-r-[#808080] border-b-[#808080] border-l-white bg-[#d4d0c8] px-0.5 pt-0.5 text-left font-normal">Last Name</th>
                    <th class="h-5 truncate border border-t-white border-r-[#808080] border-b-[#808080] border-l-white bg-[#d4d0c8] px-0.5 pt-0.5 text-left font-normal">Quantity...</th>
                    <th class="h-5 truncate border border-t-white border-r-[#808080] border-b-[#808080] border-l-white bg-[#d4d0c8] px-0.5 pt-0.5 text-left font-normal">Sales</th>
                  </tr>
                </thead>
              </table>
            </div>
          </section>
        </div>
      </main>
    </div>

    <!-- STATUS BAR -->
    <footer class="flex items-center justify-between pt-0.5">
      <div class="flex h-[19px] w-[132px] items-center border border-t-[#808080] border-r-white border-b-white border-l-[#808080] whitespace-nowrap">Logged In: Jason Jason</div>
      <div class="flex items-end gap-6">
        <span class="font-['DejaVu_Sans_Condensed','Noto_Sans_CJK_SC',sans-serif]">2019年3月23日</span>
        <svg viewBox="0 0 12 12" class="size-3"><path d="M0 12L12 0M4 12l8-8M8 12l4-4" stroke="#fff"/><path d="M1 12L12 1M5 12l7-7M9 12l3-3" stroke="#808080" stroke-width="1.500"/></svg>
      </div>
    </footer>

  </div>
  </div>

</body>
</html>
